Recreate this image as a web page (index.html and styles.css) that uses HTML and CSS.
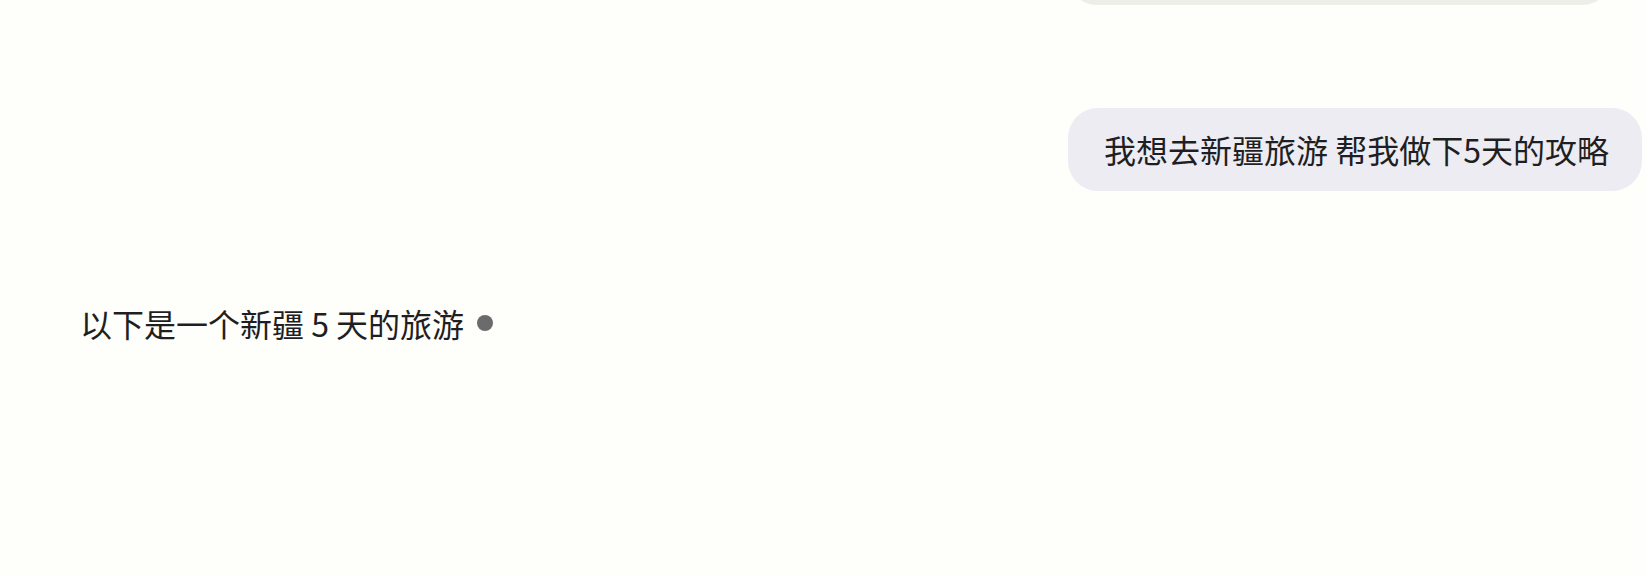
FILE: index.html
```html
<!DOCTYPE html>
<html lang="zh-CN">
<head>
<meta charset="utf-8">
<title>Chat</title>
<link rel="stylesheet" href="styles.css">
</head>
<body>
<main class="chat">
  <div class="bubble bubble-prev"></div>
  <div class="bubble bubble-user">我想去新疆旅游 帮我做下5天的攻略</div>
  <div class="reply">以下是一个新疆 5 天的旅游 <span class="cursor"></span></div>
</main>
</body>
</html>
```

FILE: styles.css
```css
html, body {
  margin: 0;
  padding: 0;
  background: #fefefb;
}
body {
  width: 1646px;
  height: 576px;
  overflow: hidden;
  font-family: "Noto Sans CJK SC", "Noto Sans", sans-serif;
  color: #1f1f23;
}
.chat {
  display: flex;
  flex-direction: column;
  padding: 0 4px 0 80px;
}
.bubble {
  align-self: flex-end;
  background: #ececf2;
  border-radius: 30px;
  font-size: 32px;
  line-height: 44px;
  padding: 19px 33px 20px 36px;
  white-space: nowrap;
}
.bubble-prev {
  box-sizing: border-box;
  height: 80px;
  margin-top: -75px;
  margin-right: 30px;
  width: 545px;
  background: #eeeee8;
}
.bubble-user {
  margin-top: 103px;
}
.reply {
  margin-top: 110px;
  font-size: 32px;
  line-height: 44px;
  display: flex;
  align-items: center;
  white-space: pre;
}
.cursor {
  display: inline-block;
  width: 16px;
  height: 16px;
  border-radius: 50%;
  background: #6b6b6b;
  margin-left: 6px;
}
```
